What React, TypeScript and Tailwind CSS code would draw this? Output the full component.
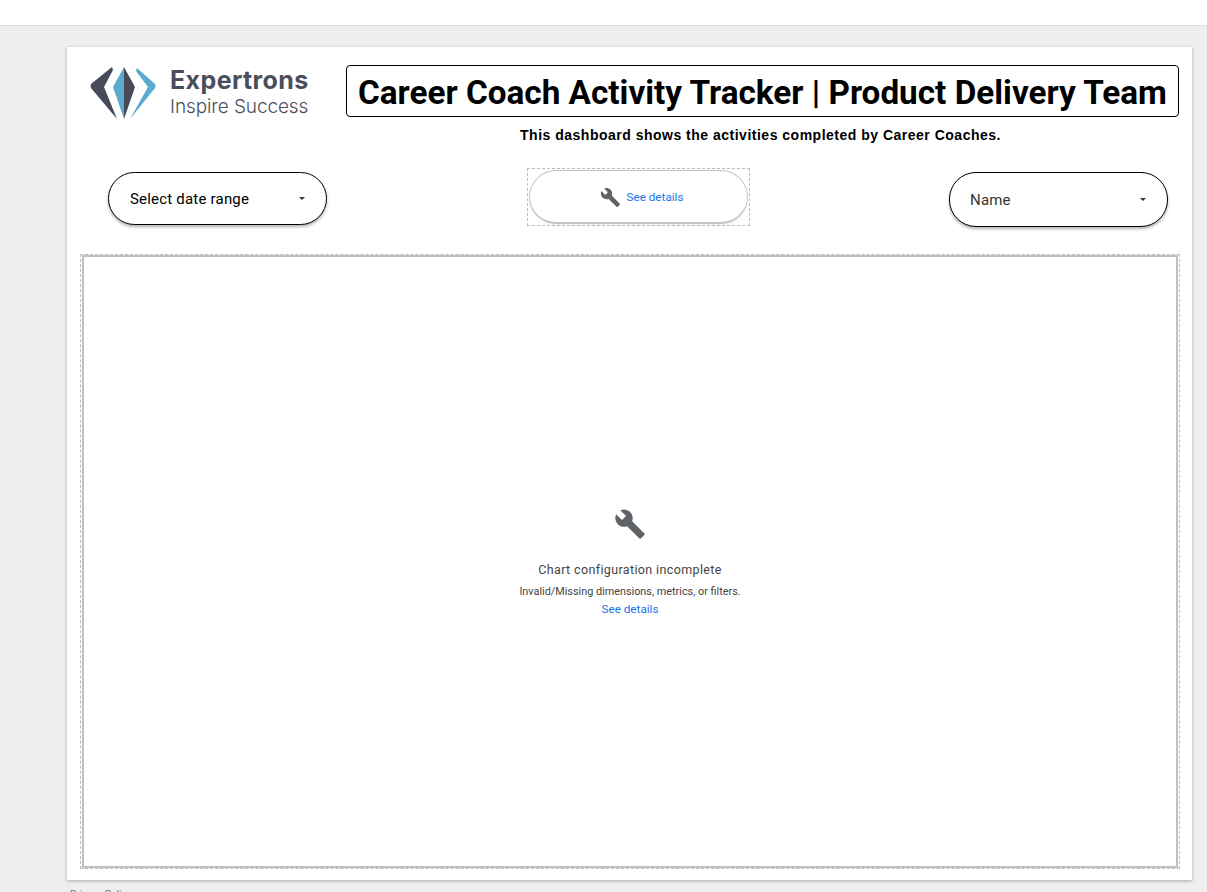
import { MdBuild } from "react-icons/md";

function Caret() {
  return (
    <svg width="6" height="3" viewBox="0 0 6 3" className="shrink-0">
      <path d="M0 0h6L3 3z" fill="#333" />
    </svg>
  );
}

function FilterPill({ label, className }: { label: string; className: string }) {
  return (
    <div
      className={`flex items-center justify-between w-[219px] rounded-[27px] border border-black bg-white pr-[21px] text-[15px] tracking-[0.2px] shadow-[0_2px_3px_rgba(0,0,0,0.3)] ${className}`}
    >
      <span className="pt-[2px]">{label}</span>
      <Caret />
    </div>
  );
}

export default function App() {
  return (
    <div className="h-[892px] overflow-hidden bg-[#eeeeee] font-['Roboto',sans-serif]">
      {/* Top bar */}
      <div className="h-[26px] bg-white border-b border-[#dcdcdc]" />

      {/* Report page */}
      <div className="ml-[67px] mt-[21px] w-[1125px] h-[833px] bg-white pt-[18px] shadow-[0_1px_3px_rgba(0,0,0,0.3)]">
        {/* Header */}
        <div className="flex items-start">
          <div className="ml-[23px] w-[220px] h-[55px] flex items-center gap-[14px] shrink-0">
            <svg width="66" height="55" viewBox="0 0 66 55" className="shrink-0">
              <path d="M22 2 L1 19 Q0 21 1 23 L27 54 L14 22 L23 5 Z" fill="#474a59" />
              <path d="M34 2 L23 22 L34 54 Z" fill="#5aabcd" />
              <path d="M34 2 L45 22 L34 54 Z" fill="#474a59" />
              <path d="M47 3 L65 19 Q66 21 65 23 L40 54 L58 22 L46 6 Z" fill="#5aabcd" />
            </svg>
            <div className="font-['Inter',sans-serif] text-[#4a4d5c] whitespace-nowrap">
              <div className="text-[25px] leading-[28px] font-bold tracking-[0.4px]">Expertrons</div>
              <div className="mt-px text-[19px] leading-[24px] font-light tracking-[-0.1px]">Inspire Success</div>
            </div>
          </div>
          <div className="ml-[36px] w-[833px] h-[52px] flex items-center justify-center rounded-[4px] border border-black pt-[4px] text-[33.300px] font-bold text-black whitespace-nowrap">
            Career Coach Activity Tracker | Product Delivery Team
          </div>
        </div>

        {/* Subtitle */}
        <div className="ml-[279px] w-[829px] mt-[5px] text-center font-['Liberation_Sans',sans-serif] text-[14px] leading-[20px] font-bold text-black tracking-[0.5px]">
          This dashboard shows the activities completed by Career Coaches.
        </div>

        {/* Controls */}
        <div className="flex items-start mt-[23px]">
          <FilterPill label="Select date range" className="ml-[41px] mt-[4px] h-[53px] pl-[21px]" />
          <div className="ml-[200px] w-[223px] h-[58px] border border-dashed border-[#bdbdbd] p-px">
            <div className="h-[54px] flex items-center justify-center gap-[6px] rounded-[27px] border border-[#c4c4c4] border-b-2 border-b-[#c4c4c4] pl-[6px] pt-[2px] shadow-[0_2px_3px_rgba(0,0,0,0.05)]">
              <MdBuild className="text-[#5f6368] text-[21px]" />
              <span className="text-[11.700px] text-[#1a73e8]">See details</span>
            </div>
          </div>
          <FilterPill label="Name" className="ml-[199px] mt-[4px] h-[55px] pl-[20px] text-[#333333]" />
        </div>

        {/* Chart placeholder */}
        <div className="ml-[13px] mt-[27px] w-[1100px] h-[615px] border border-dashed border-[#bdbdbd] px-px">
          <div className="h-full border-2 border-[#c0c0c0] flex flex-col items-center pt-[251px]">
            <MdBuild className="text-[#5f6368] text-[32px]" />
            <div className="mt-[21px] text-[12.500px] leading-[18px] tracking-[0.37px] text-[#444444]">
              Chart configuration incomplete
            </div>
            <div className="mt-[6px] text-[10.850px] leading-[14px] text-[#444444]">
              Invalid/Missing dimensions, metrics, or filters.
            </div>
            <div className="mt-[2px] text-[11.700px] leading-[16px] text-[#1a73e8]">See details</div>
          </div>
        </div>
      </div>

      {/* Footer link, cut off by the window */}
      <div className="ml-[70px] mt-[8px] text-[10px] leading-[14px] text-[#757575]">Privacy Policy</div>
    </div>
  );
}
